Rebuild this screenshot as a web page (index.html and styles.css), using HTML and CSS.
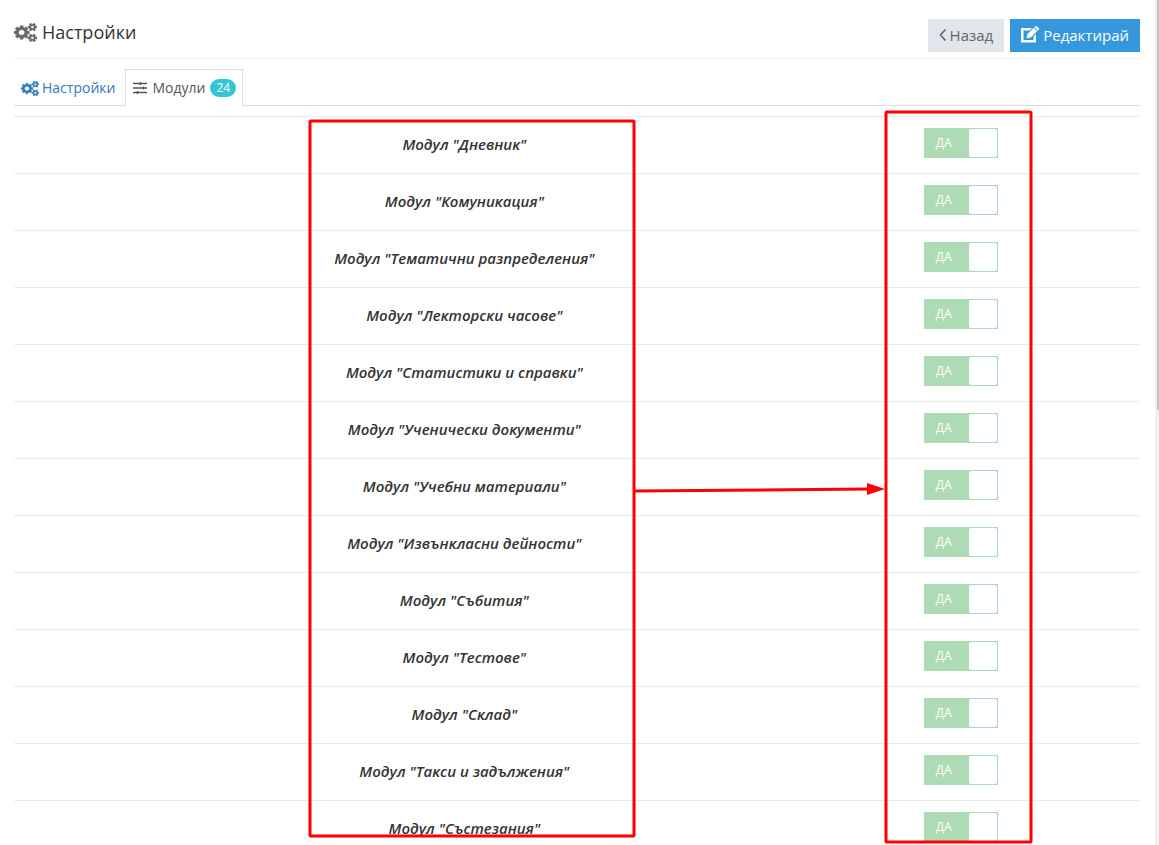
FILE: index.html
```html
<!DOCTYPE html>
<html lang="bg">
<head>
<meta charset="utf-8">
<meta name="viewport" content="width=device-width, initial-scale=1">
<title>Настройки</title>
<link rel="stylesheet" href="styles.css">
<script src="modules.js" defer></script>
</head>
<body>
<svg class="sprite" aria-hidden="true">
  <symbol id="cogs" viewBox="0 0 1920 1792" preserveAspectRatio="none"><path d="M896 896q0-106-75-181t-181-75-181 75-75 181 75 181 181 75 181-75 75-181zm768 512q0-52-38-90t-90-38-90 38-38 90q0 53 37.500 90.500t90.500 37.500 90.500-37.500 37.500-90.500zm0-1024q0-52-38-90t-90-38-90 38-38 90q0 53 37.500 90.500t90.500 37.500 90.500-37.500 37.500-90.500zm-384 421v185q0 10-7 19.500t-16 10.500l-155 24q-11 35-32 76 34 48 90 115 7 11 7 20 0 12-7 19-23 30-82.500 89.500t-78.500 59.500q-11 0-21-7l-115-90q-37 19-77 31-11 108-23 155-7 24-30 24h-186q-11 0-20-7.500t-10-17.500l-23-153q-34-10-75-31l-118 89q-7 7-20 7-11 0-21-8-144-133-144-160 0-9 7-19 10-14 41-53t47-61q-23-44-35-82l-152-24q-10-1-17-9.500t-7-19.500v-185q0-10 7-19.500t16-10.500l155-24q11-35 32-76-34-48-90-115-7-11-7-20 0-12 7-20 22-30 82-89t79-59q11 0 21 7l115 90q34-18 77-32 11-108 23-154 7-24 30-24h186q11 0 20 7.500t10 17.500l23 153q34 10 75 31l118-89q8-7 20-7 11 0 21 8 144 133 144 160 0 8-7 19-12 16-42 54t-45 60q23 48 34 82l152 23q10 2 17 10.500t7 19.500zm640 533v140q0 16-149 31-12 27-30 52 51 113 51 138 0 4-4 7-122 71-124 71-8 0-46-47t-52-68q-20 2-30 2t-30-2q-14 21-52 68t-46 47q-2 0-124-71-4-3-4-7 0-25 51-138-18-25-30-52-149-15-149-31v-140q0-16 149-31 13-29 30-52-51-113-51-138 0-4 4-7 4-2 35-20t59-34 30-16q8 0 46 46.500t52 67.500q20-2 30-2t30 2q51-71 92-112l6-2q4 0 124 70 4 3 4 7 0 25-51 138 17 23 30 52 149 15 149 31zm0-1024v140q0 16-149 31-12 27-30 52 51 113 51 138 0 4-4 7-122 71-124 71-8 0-46-47t-52-68q-20 2-30 2t-30-2q-14 21-52 68t-46 47q-2 0-124-71-4-3-4-7 0-25 51-138-18-25-30-52-149-15-149-31v-140q0-16 149-31 13-29 30-52-51-113-51-138 0-4 4-7 4-2 35-20t59-34 30-16q8 0 46 46.500t52 67.500q20-2 30-2t30 2q51-71 92-112l6-2q4 0 124 70 4 3 4 7 0 25-51 138 17 23 30 52 149 15 149 31z"/></symbol>
</svg>
<main class="page">
  <header class="header">
    <h1 class="title"><svg class="icon-title" aria-hidden="true"><use href="#cogs"/></svg>Настройки</h1>
    <div class="actions">
      <button class="btn btn-back" type="button"><svg class="icon-back" viewBox="0 0 8 12" aria-hidden="true"><path d="M6.500 .5L1.500 6L6.500 11.500"/></svg>Назад</button>
      <button class="btn btn-edit" type="button"><svg class="icon-edit" viewBox="0 0 19 17" aria-hidden="true"><path d="M0 2h11L8.500 4.500H2.500v9.500h10v-3.500L15 8v8.500H0z"/><path d="M5.500 12.300l1-4.300 6.200-6.200 3.400 3.400-6.300 6.200z"/><path d="M13.400 1.100l.7-.7q.9-.7 1.800 0l1.800 1.800q.7.900 0 1.700l-.8.800z"/></svg>Редактирай</button>
    </div>
  </header>
  <nav class="tabs">
    <a class="tab" href="#settings"><svg class="icon-tab" aria-hidden="true"><use href="#cogs"/></svg>Настройки</a>
    <a class="tab tab-active" href="#modules"><svg class="icon-sliders" viewBox="0 0 14 12" aria-hidden="true"><path d="M0 1.500h14M0 6h14M0 10.500h14M7.500 0v3M10.500 4.500v3M4.500 9v3"/></svg>Модули<span class="badge">24</span></a>
  </nav>
  <table class="modules"><tbody id="rows"></tbody></table>
</main>
<div class="scrollbar"><div class="thumb"></div></div>
<svg class="annotations" aria-hidden="true">
  <rect x="310" y="121" width="324" height="715" rx="1"/>
  <rect x="886" y="112" width="145" height="730" rx="1"/>
  <path d="M635 491L868 489"/>
  <path class="arrowhead" d="M867 483L885 489L867 495z"/>
</svg>
</body>
</html>
```
FILE: styles.css
```css
* { box-sizing: border-box; }
body {
  margin: 0;
  height: 100vh;
  display: flex;
  overflow: hidden;
  background: #fff;
  color: #333;
  font: 14px/20px "Open Sans", sans-serif;
}
.sprite { position: absolute; width: 0; height: 0; }
.page { flex: 1; min-width: 0; padding: 7px 15px 0 14px; }
.header {
  display: flex;
  justify-content: space-between;
  height: 52px;
  border-bottom: 1px solid #eee;
}
.title {
  display: flex;
  align-items: center;
  gap: 5px;
  height: 50px;
  margin: 0;
  font-size: 18px;
  font-weight: 400;
}
.icon-title { width: 23px; height: 19px; color: #666; }
.icon-title, .icon-tab { fill: currentColor; stroke: currentColor; stroke-width: 40; }
.actions { display: flex; gap: 6px; padding-top: 12px; }
.btn {
  display: flex;
  align-items: center;
  height: 33px;
  padding: 0 11px 2px;
  border: 0;
  font: 15px/20px "Open Sans", sans-serif;
}
.btn-back { gap: 3px; background: #e1e5ec; color: #666; }
.btn-edit { gap: 3px; background: #3598dc; color: #fff; }
.icon-back { width: 8px; height: 12px; fill: none; stroke: #666; stroke-width: 1.6; }
.icon-edit { width: 19px; height: 17px; fill: #fff; }
.tabs {
  display: flex;
  height: 37px;
  margin-top: 10px;
  border-bottom: 1px solid #ddd;
}
.tab {
  display: flex;
  align-items: center;
  gap: 3px;
  height: 37px;
  padding: 1px 10px 0 7px;
  color: #337ab7;
  text-decoration: none;
}
.tab-active {
  padding: 0 6px 0 7px;
  gap: 5px;
  border: 1px solid #ddd;
  border-bottom: 0;
  background: #fff;
  color: #555;
}
.icon-tab { width: 18px; height: 15px; }
.icon-sliders { width: 14px; height: 12px; stroke: #555; stroke-width: 1.4; }
.badge {
  padding: 0 6px;
  border-radius: 9px;
  background: #36c6d3;
  color: #fff;
  font-size: 12px;
  line-height: 18px;
}
.modules {
  width: 100%;
  margin-top: 10px;
  border-collapse: collapse;
  table-layout: fixed;
}
.modules td, .modules th { height: 57px; padding: 0; border-top: 1px solid #e7ecf1; text-align: center; }
.modules .spacer { width: 12%; }
.modules .name { width: 56%; padding-bottom: 2px; font-size: 15px; font-style: italic; font-weight: 600; }
.modules .state { padding: 0 0 4px 2px; }
.switch {
  display: inline-flex;
  align-items: center;
  justify-content: space-between;
  width: 74px;
  height: 30px;
  padding: 1px 1px 1px 12px;
  background: #addbb5;
  color: #fff;
  font-size: 12px;
  vertical-align: middle;
}
.knob {
  appearance: none;
  width: 28px;
  height: 28px;
  margin: 0;
  border-radius: 2px;
  background: #fff;
}
.scrollbar { width: 4px; padding-left: 2px; background: #f0f0f0; }
.thumb { height: 410px; background: #c1c1c1; }
.annotations {
  position: absolute;
  top: 0;
  left: 0;
  width: 100%;
  height: 100%;
  pointer-events: none;
  fill: none;
  stroke: #f00;
  stroke-width: 3;
}
.arrowhead { fill: #f00; stroke: none; }
```
FILE: modules.js
```js
const modules = [
  "Дневник", "Комуникация", "Тематични разпределения", "Лекторски часове",
  "Статистики и справки", "Ученически документи", "Учебни материали",
  "Извънкласни дейности", "Събития", "Тестове", "Склад",
  "Такси и задължения", "Състезания"
];
document.getElementById("rows").innerHTML = modules.map((name, i) => `
  <tr>
    <td class="spacer"></td>
    <th class="name" scope="row" id="module-${i}">Модул "${name}"</th>
    <td class="state"><label class="switch">ДА<input class="knob" type="checkbox" checked aria-labelledby="module-${i}"></label></td>
  </tr>`).join("");
```
